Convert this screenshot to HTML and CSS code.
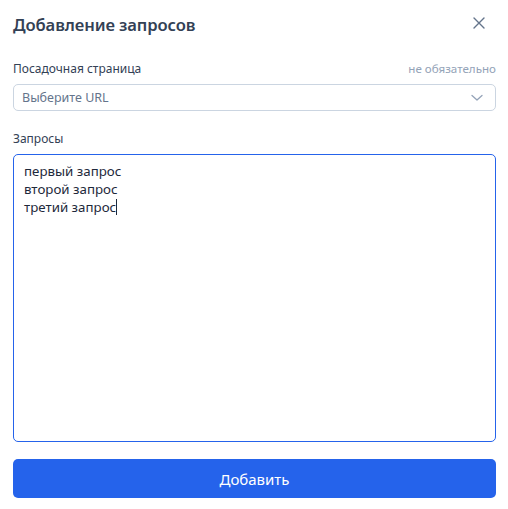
FILE: index.html
```html
<!DOCTYPE html>
<html lang="ru">
<head>
<meta charset="utf-8">
<link rel="stylesheet" href="styles.css">
</head>
<body>
<div class="modal">
  <div class="header">
    <h1 class="title">Добавление запросов</h1>
    <button class="close" aria-label="Закрыть">
      <svg width="12" height="12" viewBox="0 0 12 12"><path d="M1 1L11 11M11 1L1 11" stroke="#64748b" stroke-width="1.4" stroke-linecap="round"/></svg>
    </button>
  </div>
  <div class="label-row">
    <span class="label">Посадочная страница</span>
    <span class="optional">не обязательно</span>
  </div>
  <div class="select">
    <span class="placeholder">Выберите URL</span>
    <svg class="chevron" width="12" height="8" viewBox="0 0 12 8"><path d="M1 1.5L6 6L11 1.5" fill="none" stroke="#94a3b8" stroke-width="1.3" stroke-linecap="round" stroke-linejoin="round"/></svg>
  </div>
  <div class="label-row second">
    <span class="label">Запросы</span>
  </div>
  <div class="textarea">
    <div class="line">первый запрос</div>
    <div class="line">второй запрос</div>
    <div class="line">третий запрос<span class="caret"></span></div>
  </div>
  <button class="submit">Добавить</button>
</div>
</body>
</html>
```

FILE: styles.css
```css
* { box-sizing: border-box; }
html, body { margin: 0; padding: 0; background: #fff; }
body { font-family: "Noto Sans", "Open Sans", sans-serif; color: #1e293b; }
.modal { width: 508px; padding: 0 12px 0 13px; }
.header { height: 48px; display: flex; align-items: center; justify-content: space-between; }
.title { margin: 0; font-size: 16.6px; font-weight: 600; color: #334155; letter-spacing: -0.1px; }
.close { border: 0; background: none; padding: 0; width: 12px; height: 12px; margin-right: 11px; margin-top: -2px; display: flex; }
.label-row { margin-top: 12px; height: 16px; display: flex; align-items: center; justify-content: space-between; margin-bottom: 8px; }
.label-row.second { margin-top: 19px; }
.label { font-size: 12px; color: #334155; }
.optional { font-size: 11.6px; color: #94a3b8; }
.select { height: 27px; border: 1px solid #cbd5e1; border-radius: 5px; display: flex; align-items: center; justify-content: space-between; padding: 0 12px 0 8px; }
.placeholder { font-size: 12.5px; color: #64748b; }
.chevron { display: block; }
.textarea { height: 288px; border: 1px solid #2563eb; border-radius: 5px; padding: 7px 10px; font-size: 13.3px; line-height: 18px; color: #1e293b; }
.caret { display: inline-block; width: 1px; height: 16px; background: #1e293b; vertical-align: -3px; }
.submit { display: block; width: 100%; height: 39px; margin-top: 17px; border: 0; border-radius: 5px; background: #2563eb; color: #fff; font-family: inherit; font-size: 15px; }
```
